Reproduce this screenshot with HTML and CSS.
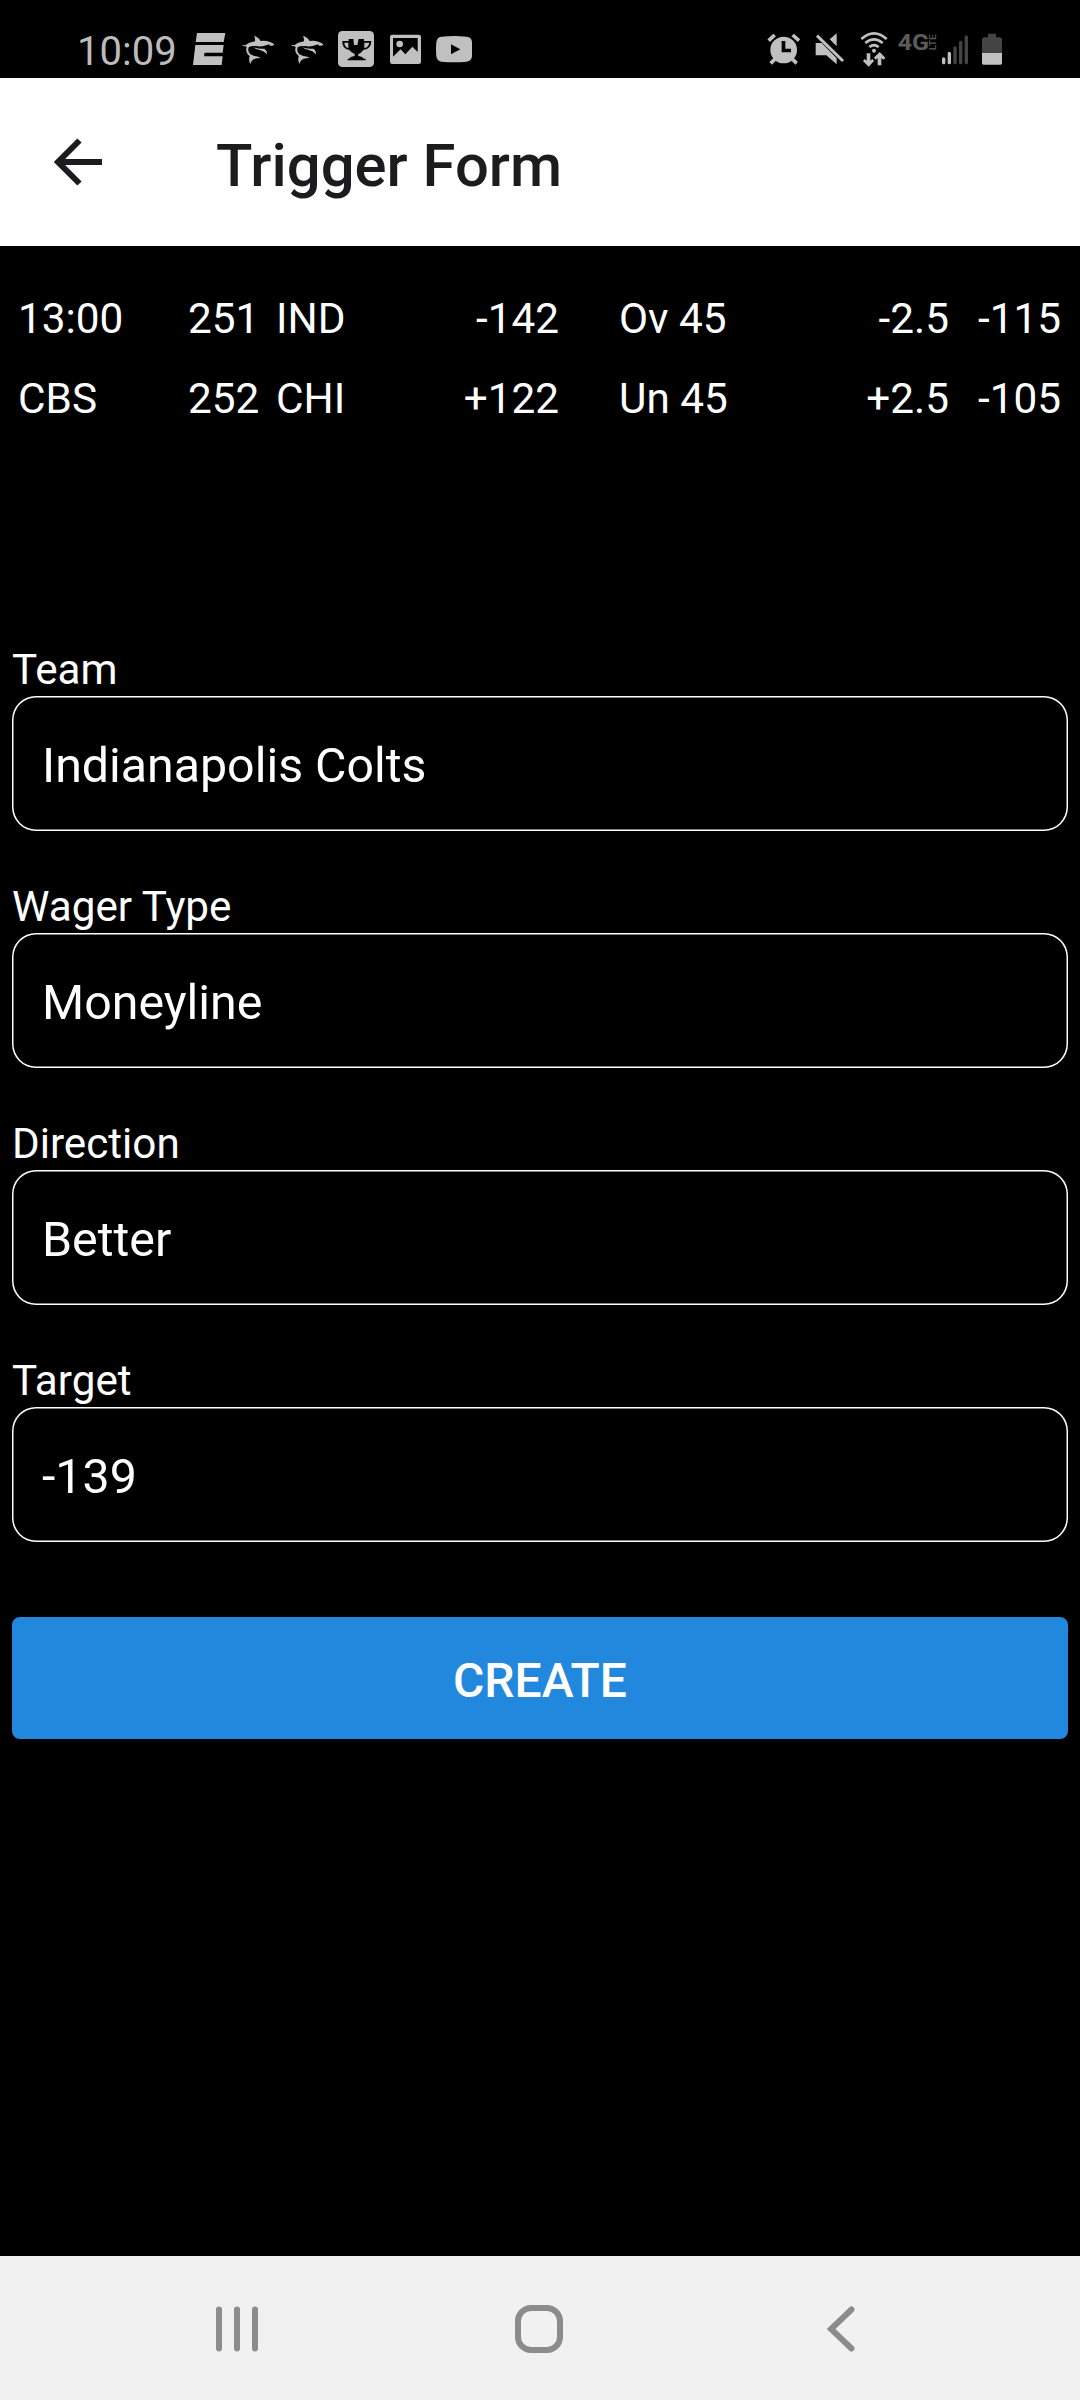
FILE: index.html
```html
<!DOCTYPE html>
<html lang="en">
<head>
<meta charset="utf-8">
<title>Trigger Form</title>
<link rel="stylesheet" href="styles.css">
</head>
<body>
<svg class="defs" width="0" height="0" aria-hidden="true">
  <symbol id="shark" viewBox="540 -30 108 234">
    <path d="M546 104L556 106Q566 97 585 94Q586 84 582 77Q597 83 602 93Q626 90 643 103Q640 109 629 107Q634 103 622 104Q606 112 588 108Q572 107 566 112Q562 124 571 133L583 138Q592 138 603 144Q590 144 582 147Q573 152 571 162Q565 150 569 138Q555 127 560 111L556 109Q550 109 546 104Z"/>
    <path d="M580 112Q600 118 613 116Q622 122 621 133Q612 122 599 120Q588 119 580 112Z"/>
  </symbol>
</svg>
<div class="screen">
  <header class="status">
    <div class="status-side">
      <span class="clock">10:09</span>
      <svg class="espn" viewBox="396 -30 102 234"><path d="M411 69H496L491 96H407ZM406 105H491L488 128H434L432 139H488L485 165H399Z"/></svg>
      <svg class="shark"><use href="#shark"/></svg>
      <svg class="shark"><use href="#shark"/></svg>
      <svg class="trophy" viewBox="174 -30 108 234"><rect x="174" y="63" width="108" height="108" rx="13"/><path class="cut" d="M206 87H252V93H274Q275 116 250 120Q243 130 235 132V138Q249 140 251 146H257V151H203V146H208Q210 140 224 138V132Q213 128 208 120Q185 116 187 93H206ZM193 98Q194 111 205 114V98ZM253 98V114Q266 111 268 98Z"/><path d="M220 86H236L232 105H222Z"/></svg>
      <svg class="photo" viewBox="330 -30 93 234"><rect x="330" y="74" width="93" height="88" rx="7"/><path class="cut" d="M339 84H413V126L397 110L376 133L362 118L339 140Z"/><circle cx="359" cy="102" r="10"/></svg>
      <svg class="video" viewBox="468 -30 108 234"><path d="M484 80Q522 76 560 80Q575 81 576 97V139Q575 154 560 155Q522 159 484 155Q471 154 469 139Q467 118 469 97Q471 81 484 80Z"/><path class="cut" d="M513 103L541 118L513 133Z"/></svg>
    </div>
    <div class="status-side">
      <svg class="alarm" viewBox="82 -30 102 234"><circle cx="132" cy="120" r="40"/><path class="line" d="M87 92L105 75M159 75L178 92M106 147L93 160M158 147L171 160"/><path class="cut" d="M126 93H137V116H154V127H126Z"/></svg>
      <svg class="mute" viewBox="225 -30 90 234"><path d="M227 99H245L290 145V163L259 136H227ZM269 88L290 70V109Z"/><path class="slash" d="M231 77L309 153"/></svg>
      <svg class="wifi" viewBox="360 -30 84 234"><path class="arc" d="M364 87Q402 53 440 87M376 99Q402 77 428 99M388 111Q402 100 416 111"/><circle cx="402" cy="122" r="6"/><path d="M380 130H391V152L397 147L402 153L386 170L369 153L374 147L380 152ZM413 166V144L407 149L402 143L419 126L436 143L431 149L424 144V166Z"/></svg>
      <svg class="network" viewBox="474 -30 114 234"><text class="gen" x="473" y="120" textLength="94" lengthAdjust="spacingAndGlyphs">4G</text><text class="lte" transform="translate(587 121) rotate(-90)" textLength="48" lengthAdjust="spacingAndGlyphs">LTE</text></svg>
      <svg class="signal" viewBox="607 -30 80 234"><path d="M612 147V158M629 130V158"/><path class="dim" d="M646 114V158M663 97V158M680 81V158"/></svg>
      <svg class="battery" viewBox="726 -30 60 234"><path class="dim" d="M744 71H768V82H780Q786 83 786 88V130H726V88Q726 83 732 82H744Z"/><path d="M726 129H786V160Q786 164 782 164H730Q726 164 726 160Z"/></svg>
    </div>
  </header>

  <div class="appbar">
    <svg class="back" viewBox="0 0 48 48"><path d="M25.500 2.500L4 24L25.500 45.500M4 24H48"/></svg>
    <h1 class="title">Trigger Form</h1>
  </div>

  <main class="content">
    <div class="odds">
      <span>13:00</span><span>251</span><span>IND</span><span class="num">-142</span><span class="total">Ov 45</span><span class="num">-2.5</span><span class="num">-115</span>
      <span>CBS</span><span>252</span><span>CHI</span><span class="num">+122</span><span class="total">Un 45</span><span class="num">+2.5</span><span class="num">-105</span>
    </div>

    <div class="form">
      <div class="field"><div class="label">Team</div><div class="input">Indianapolis Colts</div></div>
      <div class="field"><div class="label">Wager Type</div><div class="input">Moneyline</div></div>
      <div class="field"><div class="label">Direction</div><div class="input">Better</div></div>
      <div class="field"><div class="label">Target</div><div class="input">-139</div></div>
      <button class="create" type="button">CREATE</button>
    </div>
  </main>

  <nav class="navbar">
    <svg class="recents" viewBox="0 0 42 48"><path d="M3 4.500V43.500M21 4.500V43.500M39 4.500V43.500"/></svg>
    <svg class="home" viewBox="0 0 48 48"><rect x="3" y="3" width="42" height="42" rx="13"/></svg>
    <svg class="prev" viewBox="0 0 28 48"><path d="M24.500 4.500L4 24L24.500 43.500"/></svg>
  </nav>
</div>
</body>
</html>
```
FILE: styles.css
```css
* { box-sizing: border-box; }
body { margin: 0; background: #000; font-family: Roboto, sans-serif; color: #fff; }
svg { display: block; flex: none; }
.defs { position: absolute; }
.screen { width: 1080px; height: 2400px; display: flex; flex-direction: column; overflow: hidden; }

.status { height: 78px; display: flex; justify-content: space-between; padding: 0 78px 0 77px; }
.status-side { display: flex; height: 78px; }
.status svg { height: 78px; fill: #c0c0c0; }
.status svg .cut { fill: #000; }
.clock { width: 115px; padding-top: 3px; font-size: 40px; line-height: 98px; height: 78px; color: #bcbcbc; }
.espn { width: 34px; }
.shark { width: 36px; margin-left: 14px; }
.shark + .shark { margin-left: 12.500px; }
.trophy { width: 36px; margin-left: 13.500px; }
.photo { width: 31px; margin-left: 16px; }
.video { width: 36px; margin-left: 15px; }
.alarm { width: 34px; }
.alarm .line { stroke: #c0c0c0; stroke-width: 11; fill: none; }
.mute { width: 30px; margin-left: 13.700px; }
.mute .slash { stroke: #c0c0c0; stroke-width: 9; }
.wifi { width: 28px; margin-left: 15px; }
.wifi .arc { fill: none; stroke: #c0c0c0; stroke-width: 8; }
.network { width: 38px; margin-left: 10px; overflow: visible; }
.status .network { fill: #5c5c5c; }
.gen { font: 700 64px Roboto, sans-serif; }
.lte { font: 500 27px Roboto, sans-serif; }
.signal { width: 26.670px; margin-left: 6.300px; stroke: #c0c0c0; stroke-width: 10; stroke-linecap: round; }
.signal .dim { stroke: #444; }
.battery { width: 20px; margin-left: 13px; }
.battery .dim { fill: #444; }

.appbar { height: 168px; background: #fff; display: flex; align-items: center; padding-left: 54px; }
.back { width: 48px; height: 48px; fill: none; stroke: #1c1c1e; stroke-width: 6; }
.title { margin: 0 0 0 114px; padding-top: 7px; font-size: 59.800px; line-height: 80px; font-weight: 500; color: #1c1c1e; }

.content { flex: 1; padding-top: 33px; }
.odds {
  display: grid;
  grid-template-columns: 170px 88px 129px 154px 220px 170px 112px;
  grid-auto-rows: 80px;
  padding: 0 18px;
  font-size: 42.300px;
  line-height: 80px;
  white-space: nowrap;
}
.num { text-align: right; }
.total { padding-left: 60px; }

.form { padding: 206px 12px 0; }
.field { margin-bottom: 51px; }
.label { font-size: 42.200px; line-height: 49px; height: 51px; }
.input {
  height: 135px;
  border-radius: 24px;
  box-shadow: inset 0 0 0 1.500px #fff;
  padding: 4px 30px 0;
  font-size: 48.300px;
  line-height: 131px;
}
.create {
  display: block;
  width: 100%;
  height: 122px;
  margin-top: 75px;
  padding: 6px 0 0;
  border: 0;
  border-radius: 8px;
  background: #2288dd;
  color: #fff;
  font: 500 48px/116px Roboto, sans-serif;
}

.navbar { height: 144px; background: #f1f1f1; display: flex; align-items: center; padding: 2px 0 0 216px; }
.navbar svg { height: 48px; fill: none; stroke: #8c8c8c; stroke-width: 6; stroke-linecap: round; }
.recents { width: 42px; }
.home { width: 48px; margin-left: 257px; }
.prev { width: 28px; margin-left: 264px; }
```
